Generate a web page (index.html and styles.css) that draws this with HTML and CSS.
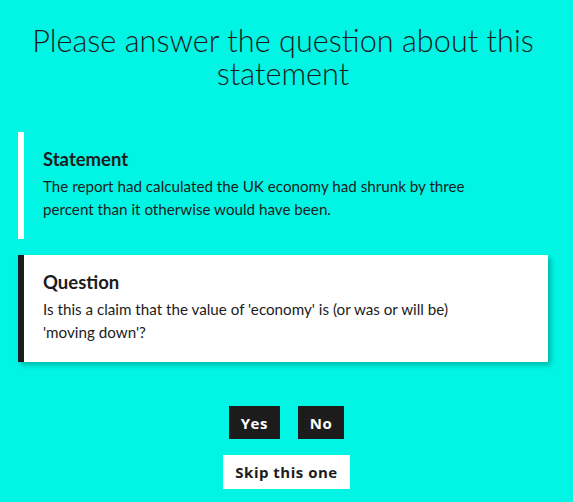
FILE: index.html
```html
<!DOCTYPE html>
<html lang="en">
<head>
    <meta charset="UTF-8">
    <meta name="viewport" content="width=device-width, initial-scale=1.0">
    <title>Statement Question</title>
    <link rel="stylesheet" href="styles.css">
</head>
<body>
    <div class="page">
        <h1>Please answer the question about this statement</h1>

        <!-- Statement -->
        <div class="panel statement">
            <h3>Statement</h3>
            <p>The report had calculated the UK economy had shrunk by three percent than it otherwise would have been.</p>
        </div>

        <!-- Question -->
        <div class="panel question">
            <h3>Question</h3>
            <p>Is this a claim that the value of 'economy' is (or was or will be) 'moving down'?</p>
        </div>

        <div class="answers">
            <div class="answer-row">
                <button class="btn dark">Yes</button>
                <button class="btn dark">No</button>
            </div>
            <button class="btn light">Skip this one</button>
        </div>
    </div>
</body>
</html>
```

FILE: styles.css
```css
body {
    font-family: Lato, "Open Sans", sans-serif;
    margin: 0;
    background-color: #00f5e4;
    color: #1c1c1c;
}
.page {
    padding: 24px 25px 0 18px;
}
h1 {
    font-size: 30.7px;
    font-weight: 300;
    line-height: 33px;
    text-align: center;
    margin: 0 0 42px;
    padding: 0 10px;
}
.panel {
    border-left: 6px solid #fff;
    padding: 16px 19px 18px;
    margin-bottom: 16px;
}
.panel h3 {
    font-size: 18.5px;
    font-weight: 700;
    line-height: 22px;
    margin: 0 0 5px;
}
.panel p {
    font-size: 15.2px;
    line-height: 23px;
    margin: 0;
    max-width: 428px;
}
.question {
    background-color: #fff;
    border-left-color: #1c1c1c;
    box-shadow: 3px 3px 5px rgba(0,0,0,0.25);
}
.answers {
    display: flex;
    flex-direction: column;
    align-items: center;
    gap: 16px;
    margin-top: 44px;
    margin-right: -7px;
}
.answer-row {
    display: flex;
    gap: 18px;
}
.btn {
    font-family: "Open Sans", sans-serif;
    font-size: 15px;
    font-weight: 700;
    letter-spacing: 0.5px;
    height: 33px;
    padding: 0 12px;
    border: none;
    border-radius: 0;
    cursor: pointer;
}
.dark {
    background-color: #1c1c1c;
    color: #fff;
}
.light {
    height: 34px;
    background-color: #fff;
    color: #1c1c1c;
}
```
